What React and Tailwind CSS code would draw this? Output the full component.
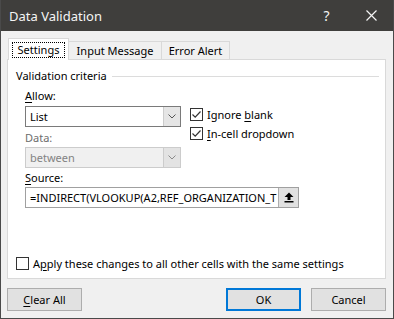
import React from 'react';

const Check = ({ checked }) => (
  <span className="w-[13px] h-[13px] border border-[#333333] bg-white flex items-center justify-center shrink-0">
    {checked && (
      <svg width="11" height="11" viewBox="0 0 11 11">
        <path d="M1.5 5.5 L4.2 8.2 L9.5 2.5" fill="none" stroke="#333333" strokeWidth="1.2" />
      </svg>
    )}
  </span>
);

const Chevron = ({ color }) => (
  <svg width="8" height="5" viewBox="0 0 8 5">
    <path d="M0.5 0.5 L4 4 L7.5 0.5" fill="none" stroke={color} strokeWidth="1" />
  </svg>
);

const U = ({ children }) => <span className="underline underline-offset-[2px] decoration-1">{children}</span>;

const Button = ({ children, primary }) => (
  <button
    className={
      'w-[75px] h-[23px] bg-[#e1e1e1] flex items-center justify-center text-black ' +
      (primary ? 'border-2 border-[#0078d7]' : 'border border-[#adadad]')
    }
  >
    {children}
  </button>
);

export default function App() {
  return (
    <div className="w-[394px] h-[319px] bg-[#f0f0f0] flex flex-col border-x border-b border-[#4a4a4a] overflow-hidden font-['Noto_Sans',sans-serif] text-[11px] leading-[16px] text-black">
      <div className="h-[31px] shrink-0 bg-[#3f3e3c] flex items-center text-[#f5f5f5] -mx-px">
        <span className="pl-[9px] flex-1 text-[13px]">Data Validation</span>
        <span className="w-[45px] text-center text-[14px]">?</span>
        <span className="w-[45px] flex justify-center">
          <svg width="11" height="11" viewBox="0 0 11 11">
            <path d="M0.5 0.5 L10.5 10.5 M10.5 0.5 L0.5 10.5" stroke="#f5f5f5" strokeWidth="1.2" />
          </svg>
        </span>
      </div>

      <div className="flex flex-col pl-[6px] pr-[7px] pt-[7px]">
        <div className="flex items-end h-[21px]">
          <div className="relative z-10 -mb-px ml-px w-[61px] h-[22px] bg-white border-x border-t border-[#d9d9d9] flex items-start justify-center pt-[3px]">
            <span className="border border-dotted border-black px-[5px] leading-[14px] h-[16px]">Settings</span>
          </div>
          <div className="w-[93px] h-[18px] border-t border-r border-[#d9d9d9] flex items-center justify-center">
            Input Message
          </div>
          <div className="w-[68px] h-[18px] border-t border-r border-[#d9d9d9] flex items-center justify-center">
            Error Alert
          </div>
        </div>

        <div className="h-[220px] bg-white border border-[#d9d9d9] flex flex-col">
          <div className="mt-[8px] h-[16px] flex items-center pl-[8px] pr-[6px]">
            <span>Validation criteria</span>
            <span className="flex-1 h-px bg-[#dcdcdc] ml-[5px]" />
          </div>

          <div className="pl-[17px] mt-[4px]">
            <div className="flex">
              <div className="w-[156px] flex flex-col">
                <div className="h-[16px]">
                  <U>A</U>llow:
                </div>
                <div className="mt-[2px] h-[21px] border border-[#7a7a7a] flex bg-white">
                  <span className="flex-1 pl-[4px] flex items-center">List</span>
                  <span className="w-[17px] bg-[#e5e5e5] border-l border-[#cccccc] flex items-center justify-center">
                    <Chevron color="#555555" />
                  </span>
                </div>
                <div className="mt-[3px] h-[16px] text-[#6d6d6d]">Data:</div>
                <div className="mt-[1px] h-[21px] border border-[#cccccc] flex bg-[#f0f0f0]">
                  <span className="flex-1 pl-[4px] flex items-center text-[#838383]">between</span>
                  <span className="w-[17px] bg-[#e3e3e3] border-l border-[#cccccc] flex items-center justify-center">
                    <Chevron color="#8a8a8a" />
                  </span>
                </div>
              </div>
              <div className="ml-[9px] pt-[17px] flex flex-col">
                <div className="h-[19px] flex items-center gap-[4px]">
                  <Check checked />
                  <span>
                    Ignore <U>b</U>lank
                  </span>
                </div>
                <div className="h-[19px] flex items-center gap-[4px]">
                  <Check checked />
                  <span>
                    <U>I</U>n-cell dropdown
                  </span>
                </div>
              </div>
            </div>
            <div className="mt-[2px] h-[16px]">
              <U>S</U>ource:
            </div>
            <div className="mt-[1px] w-[274px] h-[21px] border border-[#a0a0a0] flex bg-white">
              <span className="flex-1 pl-[4px] flex items-center overflow-hidden whitespace-nowrap">
                =INDIRECT(VLOOKUP(A2,REF_ORGANIZATION_T
              </span>
              <span className="w-[20px] bg-[#e1e1e1] border-l border-[#adadad] flex items-center justify-center">
                <svg width="10" height="11" viewBox="0 0 10 11">
                  <path d="M5 0.5 L9.5 5 L6.5 5 L6.5 8 L3.5 8 L3.5 5 L0.5 5 Z" fill="#000000" />
                  <rect x="0.5" y="9" width="9" height="1.5" fill="#000000" />
                </svg>
              </span>
            </div>
          </div>

          <div className="mt-auto mb-[5px] h-[19px] pl-[8px] flex items-center gap-[4px]">
            <Check />
            <span>
              A<U>p</U>ply these changes to all other cells with the same settings
            </span>
          </div>
        </div>

        <div className="mt-[9px] flex justify-between">
          <Button>
            <span>
              <U>C</U>lear All
            </span>
          </Button>
          <div className="flex gap-[10px]">
            <Button primary>OK</Button>
            <Button>Cancel</Button>
          </div>
        </div>
      </div>
    </div>
  );
}
